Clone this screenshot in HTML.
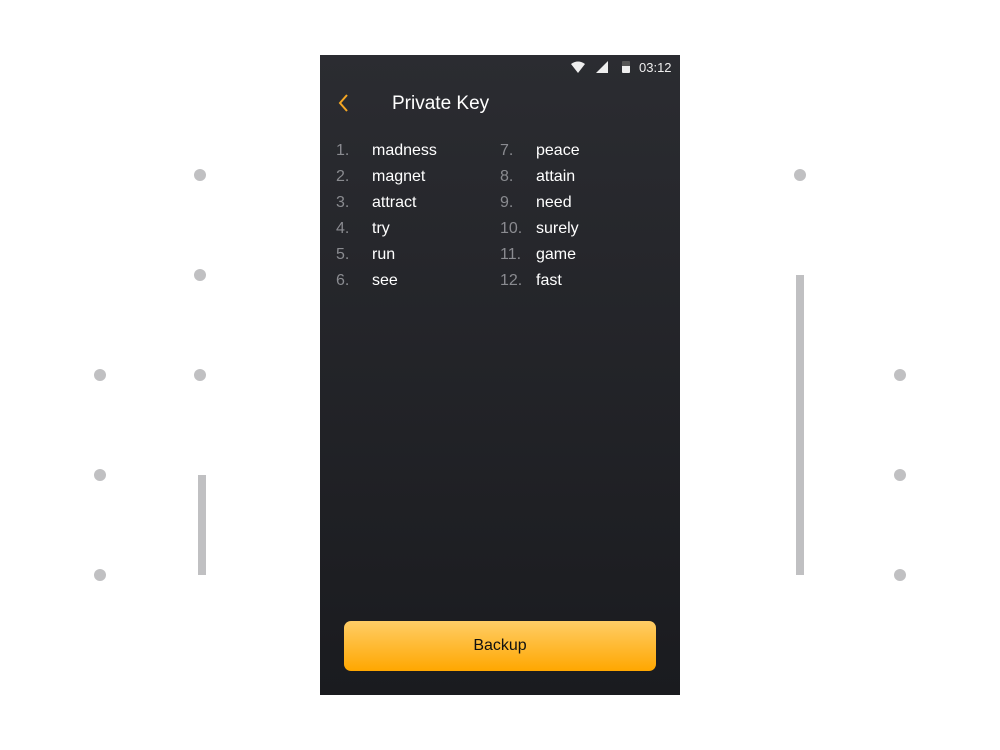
<!DOCTYPE html>
<html><head><style>
*{margin:0;padding:0;box-sizing:border-box}
body{width:1000px;height:750px;background:#fff;position:relative;overflow:hidden;font-family:"Liberation Sans",sans-serif}
.d{position:absolute;width:12px;height:12px;border-radius:50%;background:#c0c0c2}
.b{position:absolute;width:8px;background:#c0c0c2}
.ph{position:absolute;left:320px;top:55px;width:360px;height:640px;background:linear-gradient(#2b2c31,#1a1b1f)}
.t{position:absolute;font-size:16px;color:#fff}
.n{position:absolute;font-size:16px;color:#8a8b90}
.btn{position:absolute;left:24px;top:566px;width:312px;height:50px;border-radius:7px;background:linear-gradient(#ffcd66,#ffa700);color:#111;font-size:16px;text-align:center;line-height:50px}
</style></head><body>
<div class="d" style="left:194px;top:169px"></div>
<div class="d" style="left:194px;top:269px"></div>
<div class="d" style="left:194px;top:369px"></div>
<div class="d" style="left:94px;top:369px"></div>
<div class="d" style="left:94px;top:469px"></div>
<div class="d" style="left:94px;top:569px"></div>
<div class="b" style="left:198px;top:475px;height:100px"></div>
<div class="d" style="left:794px;top:169px"></div>
<div class="b" style="left:796px;top:275px;height:300px"></div>
<div class="d" style="left:894px;top:369px"></div>
<div class="d" style="left:894px;top:469px"></div>
<div class="d" style="left:894px;top:569px"></div>
<div class="ph">
<svg style="position:absolute;left:250px;top:6px" width="16" height="14" viewBox="0 0 16 14"><path d="M1 3 Q8 -2 15 3 L8 12Z" fill="#eee"/></svg>
<svg style="position:absolute;left:276px;top:6px" width="12" height="12"><path d="M12 0V12H0Z" fill="#eee"/></svg>
<div style="position:absolute;left:302px;top:6px;width:8px;height:12px;background:linear-gradient(#555 0 40%,#eee 40%);border-radius:1px"></div>
<div class="t" style="left:319px;top:5px;font-size:13px;color:#eee">03:12</div>
<svg style="position:absolute;left:17px;top:39px" width="12" height="18"><path d="M10 1L3 9L10 17" stroke="#f5a623" stroke-width="2" fill="none"/></svg>
<div class="t" style="left:72px;top:38px;font-size:19px">Private Key</div>
<div class="n" style="left:16px;top:87px">1.</div><div class="t" style="left:52px;top:87px">madness</div>
<div class="n" style="left:16px;top:113px">2.</div><div class="t" style="left:52px;top:113px">magnet</div>
<div class="n" style="left:16px;top:139px">3.</div><div class="t" style="left:52px;top:139px">attract</div>
<div class="n" style="left:16px;top:165px">4.</div><div class="t" style="left:52px;top:165px">try</div>
<div class="n" style="left:16px;top:191px">5.</div><div class="t" style="left:52px;top:191px">run</div>
<div class="n" style="left:16px;top:217px">6.</div><div class="t" style="left:52px;top:217px">see</div>
<div class="n" style="left:180px;top:87px">7.</div><div class="t" style="left:216px;top:87px">peace</div>
<div class="n" style="left:180px;top:113px">8.</div><div class="t" style="left:216px;top:113px">attain</div>
<div class="n" style="left:180px;top:139px">9.</div><div class="t" style="left:216px;top:139px">need</div>
<div class="n" style="left:180px;top:165px">10.</div><div class="t" style="left:216px;top:165px">surely</div>
<div class="n" style="left:180px;top:191px">11.</div><div class="t" style="left:216px;top:191px">game</div>
<div class="n" style="left:180px;top:217px">12.</div><div class="t" style="left:216px;top:217px">fast</div>
<div class="btn">Backup</div>
</div>
</body></html>
